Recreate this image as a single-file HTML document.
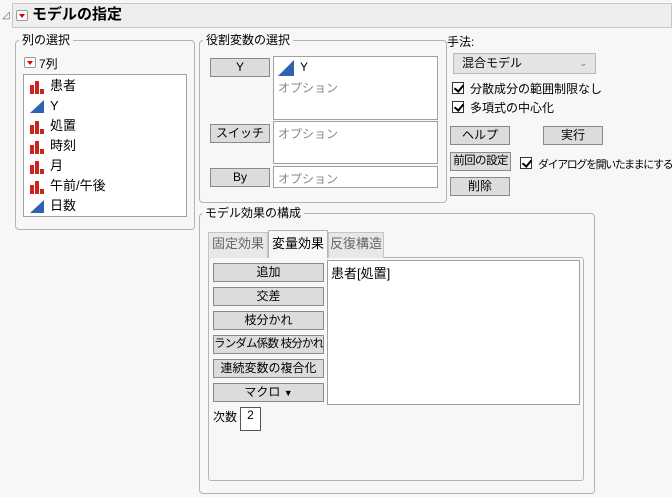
<!DOCTYPE html>
<html><head><meta charset="utf-8"><style>
*{box-sizing:border-box;margin:0;padding:0}
body{width:672px;height:497px;background:#f7f7f7;font-family:"Liberation Sans","Noto Sans CJK JP",sans-serif;font-size:12px;color:#000;position:relative;overflow:hidden;white-space:nowrap}
.a{position:absolute}
.grp{position:absolute;border:1px solid #b4b4b4;border-radius:4px}
.gt{position:absolute;background:#f7f7f7;padding:0 3px;font-size:12px;line-height:14px}
.btn{position:absolute;background:#dcdcdc;border:1px solid #8a8a8a;text-align:center;font-size:12px;line-height:16px;overflow:hidden}
.box{position:absolute;background:#fff;border:1px solid #a0a0a0}
.opt{color:#888}
.cb{position:absolute;width:12px;height:12px;border:1px solid #333;background:#fff}
.cb::after{content:"";position:absolute;left:3px;top:0px;width:4px;height:7px;border:solid #000;border-width:0 2px 2px 0;transform:rotate(40deg)}
.red{position:absolute;width:12px;height:11px;border:1px solid #999;background:#fff;border-radius:2px}
.red::after{content:"";position:absolute;left:2px;top:3px;border-left:3px solid transparent;border-right:3px solid transparent;border-top:4px solid #d00}
.li{position:absolute;left:6px;height:20px;line-height:20px;font-size:13px}
.bar{display:inline-block;vertical-align:middle;margin-right:6px;width:14px;height:13px;position:relative}
.tri{display:inline-block;vertical-align:middle;margin-right:6px;width:0;height:0;border-left:14px solid transparent;border-bottom:13px solid #2f62b0}
</style></head><body>
<div class="a" style="left:2px;top:10px;font-size:10px;color:#666">◿</div>
<div class="a" style="left:12px;top:3px;width:660px;height:25px;background:#eeeeee;border:1px solid #c8c8c8"></div>
<div class="red" style="left:16px;top:10px"></div>
<div class="a" style="left:32px;top:5px;font-size:15px;font-weight:bold;line-height:20px">モデルの指定</div>

<div class="grp" style="left:15px;top:40px;width:180px;height:190px"></div>
<div class="gt" style="left:19px;top:33px">列の選択</div>
<div class="red" style="left:24px;top:57px"></div>
<div class="a" style="left:39px;top:55px;font-size:12px">7列</div>
<div class="box" style="left:23px;top:74px;width:164px;height:143px">
<div class="li" style="top:1px"><span class="bar"><svg width="14" height="13"><rect x="0" y="4" width="4" height="9" fill="#c8261c"/><rect x="5" y="0" width="4" height="13" fill="#c8261c"/><rect x="10" y="8" width="4" height="5" fill="#c8261c"/></svg></span>患者</div>
<div class="li" style="top:21px"><span class="tri"></span>Y</div>
<div class="li" style="top:41px"><span class="bar"><svg width="14" height="13"><rect x="0" y="4" width="4" height="9" fill="#c8261c"/><rect x="5" y="0" width="4" height="13" fill="#c8261c"/><rect x="10" y="8" width="4" height="5" fill="#c8261c"/></svg></span>処置</div>
<div class="li" style="top:61px"><span class="bar"><svg width="14" height="13"><rect x="0" y="4" width="4" height="9" fill="#c8261c"/><rect x="5" y="0" width="4" height="13" fill="#c8261c"/><rect x="10" y="8" width="4" height="5" fill="#c8261c"/></svg></span>時刻</div>
<div class="li" style="top:81px"><span class="bar"><svg width="14" height="13"><rect x="0" y="4" width="4" height="9" fill="#c8261c"/><rect x="5" y="0" width="4" height="13" fill="#c8261c"/><rect x="10" y="8" width="4" height="5" fill="#c8261c"/></svg></span>月</div>
<div class="li" style="top:101px"><span class="bar"><svg width="14" height="13"><rect x="0" y="4" width="4" height="9" fill="#c8261c"/><rect x="5" y="0" width="4" height="13" fill="#c8261c"/><rect x="10" y="8" width="4" height="5" fill="#c8261c"/></svg></span>午前/午後</div>
<div class="li" style="top:121px"><span class="tri"></span>日数</div>
</div>

<div class="grp" style="left:199px;top:40px;width:248px;height:163px"></div>
<div class="gt" style="left:203px;top:33px">役割変数の選択</div>
<div class="btn" style="left:210px;top:58px;width:60px;height:19px">Y</div>
<div class="box" style="left:273px;top:56px;width:165px;height:64px"><div class="a" style="left:4px;top:3px;line-height:14px"><span class="tri" style="border-left-width:16px;border-bottom-width:16px;margin-right:6px"></span>Y</div><div class="a opt" style="left:4px;top:22px">オプション</div></div>
<div class="btn" style="left:210px;top:124px;width:60px;height:19px">スイッチ</div>
<div class="box" style="left:273px;top:121px;width:165px;height:43px"><div class="a opt" style="left:4px;top:3px">オプション</div></div>
<div class="btn" style="left:210px;top:168px;width:60px;height:19px">By</div>
<div class="box" style="left:273px;top:166px;width:165px;height:22px"><div class="a opt" style="left:4px;top:3px">オプション</div></div>

<div class="a" style="left:447px;top:33px">手法:</div>
<div class="a" style="left:453px;top:53px;width:143px;height:21px;background:#e4e4e4;border:1px solid #b8b8b8;line-height:19px;padding-left:8px">混合モデル<span style="position:absolute;right:8px;top:0;font-size:9px;color:#777">⌄</span></div>
<div class="cb" style="left:452px;top:82px"></div><div class="a" style="left:470px;top:80px">分散成分の範囲制限なし</div>
<div class="cb" style="left:452px;top:101px"></div><div class="a" style="left:470px;top:99px">多項式の中心化</div>
<div class="btn" style="left:450px;top:126px;width:60px;height:19px">ヘルプ</div>
<div class="btn" style="left:543px;top:126px;width:60px;height:19px">実行</div>
<div class="btn" style="left:450px;top:152px;width:61px;height:19px;font-size:11.5px;letter-spacing:-0.6px">前回の設定</div>
<div class="cb" style="left:520px;top:157px"></div><div class="a" style="left:538px;top:156px;font-size:11px;letter-spacing:-1.4px">ダイアログを開いたままにする</div>
<div class="btn" style="left:450px;top:177px;width:60px;height:19px">削除</div>

<div class="grp" style="left:199px;top:213px;width:396px;height:281px"></div>
<div class="gt" style="left:202px;top:206px">モデル効果の構成</div>
<div class="a" style="left:208px;top:257px;width:376px;height:224px;border:1px solid #b4b4b4;border-radius:3px;background:#f7f7f7"></div>
<div class="a" style="left:208px;top:232px;width:60px;height:26px;background:#e8e8e8;border:1px solid #c4c4c4;border-bottom:none;color:#666;text-align:center;line-height:22px;font-size:13px">固定効果</div>
<div class="a" style="left:268px;top:230px;width:60px;height:28px;background:#f7f7f7;border:1px solid #b4b4b4;border-bottom:none;text-align:center;line-height:26px;font-size:13px">変量効果</div>
<div class="a" style="left:328px;top:232px;width:56px;height:26px;background:#e8e8e8;border:1px solid #c4c4c4;border-bottom:none;color:#666;text-align:center;line-height:22px;font-size:13px">反復構造</div>
<div class="btn" style="left:213px;top:263px;width:111px;height:19px">追加</div>
<div class="btn" style="left:213px;top:287px;width:111px;height:19px">交差</div>
<div class="btn" style="left:213px;top:311px;width:111px;height:19px">枝分かれ</div>
<div class="btn" style="left:213px;top:335px;width:111px;height:19px;font-size:11.5px;letter-spacing:-0.8px">ランダム係数 枝分かれ</div>
<div class="btn" style="left:213px;top:359px;width:111px;height:19px">連続変数の複合化</div>
<div class="btn" style="left:213px;top:383px;width:111px;height:19px">マクロ <span style="font-size:9px">▼</span></div>
<div class="box" style="left:327px;top:260px;width:253px;height:145px"><div class="a" style="left:3px;top:2px;font-size:13px">患者[処置]</div></div>
<div class="a" style="left:213px;top:408px">次数</div>
<div class="box" style="left:240px;top:407px;width:21px;height:24px;border-color:#555;text-align:center;line-height:14px">2</div>
</body></html>
